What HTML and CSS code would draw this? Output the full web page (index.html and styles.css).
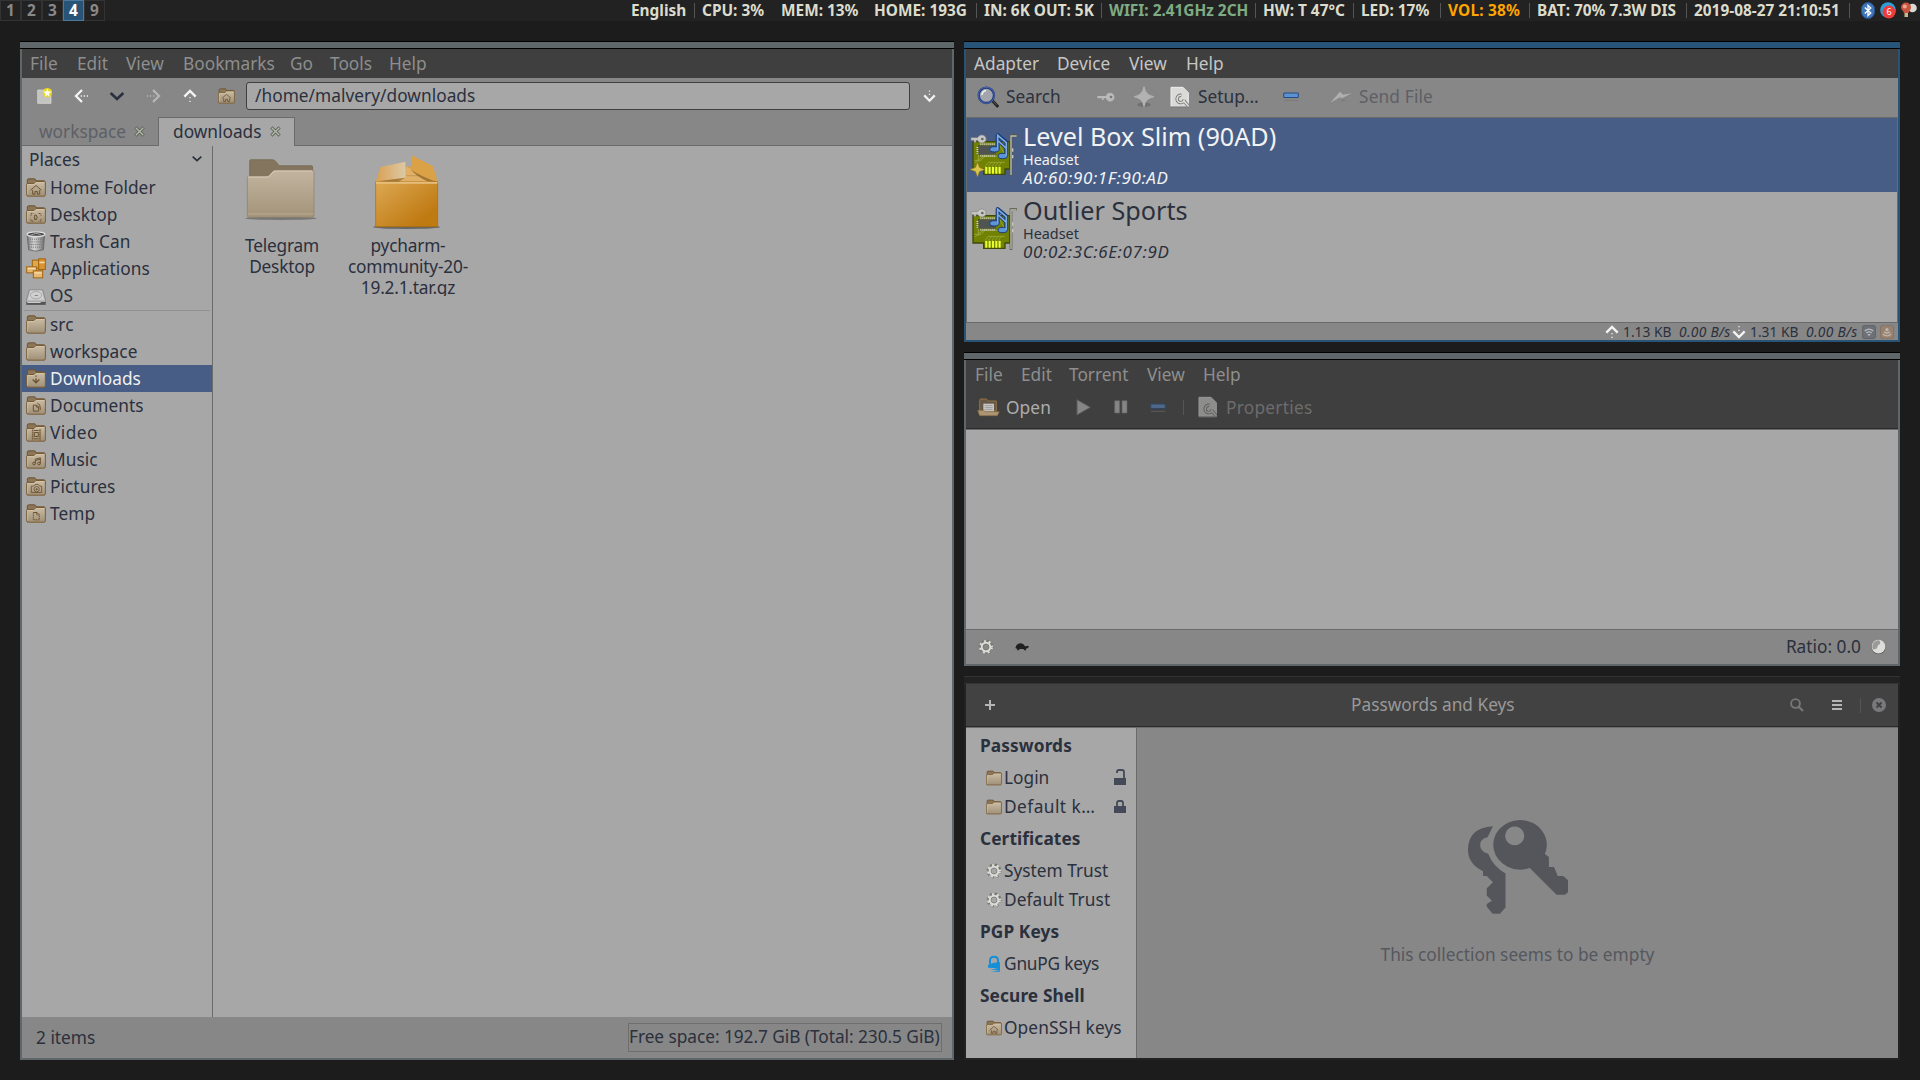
FILE: index.html
```html
<!DOCTYPE html>
<html lang="en">
<head>
<meta charset="utf-8">
<title>Workspace 4</title>
<link rel="stylesheet" href="styles.css">
</head>
<body>
<svg class="defs" aria-hidden="true">
  <defs>
    <linearGradient id="gFolder" x1="0" y1="0" x2="0" y2="1"><stop offset="0" stop-color="#cbbda5"/><stop offset="1" stop-color="#9f9078"/></linearGradient>
    <linearGradient id="gBig" x1="0" y1="0" x2="0" y2="1"><stop offset="0" stop-color="#c2b49f"/><stop offset="1" stop-color="#a3937a"/></linearGradient>
    <linearGradient id="gBox" x1="0" y1="0" x2="1" y2="1"><stop offset="0" stop-color="#dda853"/><stop offset=".8" stop-color="#bf7a12"/></linearGradient>
    <linearGradient id="gFlap" x1="0" y1="0" x2="1" y2="0"><stop offset="0" stop-color="#d9a052"/><stop offset="1" stop-color="#dcc9a5"/></linearGradient>
    <linearGradient id="gMetal" x1="0" y1="0" x2="1" y2="0"><stop offset="0" stop-color="#777"/><stop offset=".4" stop-color="#d5d5d5"/><stop offset="1" stop-color="#707070"/></linearGradient>
    <symbol id="folder" viewBox="0 0 60 58">
      <path d="M4 20V7q0-4 4-4h18q3 0 4 6h24q3 0 3 4v10z" fill="#8b7658" stroke="#6d5231" stroke-width="3"/>
      <path d="M2 20q0-3 3-3h19l6-6h25q3 0 3 3v37q0 4-4 4H6q-4 0-4-4z" fill="url(#gFolder)" stroke="#7b5c32" stroke-width="3"/>
      <path d="M5 50V20h20l6-6h24" fill="none" stroke="#d8c9ad" stroke-width="2"/>
    </symbol>
    <symbol id="folderHome" viewBox="0 0 60 58"><use href="#folder"/><path d="M14 37l16-14 16 14M20 37v12h7v-8h7v8h7V37" fill="none" stroke="#6c5230" stroke-width="3"/></symbol>
    <symbol id="gear" viewBox="0 0 46 46">
      <circle cx="23" cy="23" r="17" fill="none" stroke="#77776f" stroke-width="9" stroke-dasharray="7 6.35"/>
      <circle cx="23" cy="23" r="16" fill="none" stroke="#dcdcd8" stroke-width="8" stroke-dasharray="5 8.35" stroke-dashoffset="-1"/>
      <circle cx="23" cy="23" r="12" fill="none" stroke="#dcdcd8" stroke-width="6"/>
      <circle cx="23" cy="23" r="8.5" fill="none" stroke="#77776f" stroke-width="2"/>
    </symbol>
    <symbol id="tabx" viewBox="0 0 32 32"><path d="M4 4l24 24M28 4L4 28" stroke="#5b6055" stroke-width="9"/><path d="M5 5l22 22M27 5L5 27" stroke="#b4b9a9" stroke-width="4"/></symbol>
    <symbol id="setup" viewBox="0 0 60 64">
      <path d="M3 3h36l16 16v42H3z" fill="#dadad8" stroke="#efefef" stroke-width="3"/>
      <path d="M2 62h54" stroke="#666" stroke-width="3"/>
      <path d="M34 27a11 11 0 1 0 9 13M42 44l12 14" fill="none" stroke="#73736f" stroke-width="10"/>
      <path d="M34 27a11 11 0 1 0 9 13M40 42l14 16" fill="none" stroke="#dedede" stroke-width="5"/>
    </symbol>
    <symbol id="minus" viewBox="0 0 46 26"><path d="M3 24h40" stroke="#7b7b7b" stroke-width="3"/><rect x="2" y="3" width="42" height="13" rx="2" fill="#5d92d2" stroke="#264a84" stroke-width="3"/></symbol>
    <symbol id="device" viewBox="0 0 142 132">
      <path d="M8 26H118V108H104V124H40V108H8z" fill="#718102" stroke="#3f4a09" stroke-width="4"/>
      <path d="M14 90l24-20h46M86 34l20 36M12 82h20l16-16M24 54v32" stroke="#97a538" stroke-width="3" fill="none"/>
      <path d="M46 120V98l8-10h50M56 120V98l8-10M66 120V98l8-10M76 120V98l8-10M86 120V98l8-10" stroke="#a4b245" stroke-width="2" fill="none"/>
      <path d="M48 122v-20M58 122v-20M68 122v-20M78 122v-20M88 122v-20" stroke="#e9ff2b" stroke-width="6"/>
      <path d="M30 34h44M30 68h44M22 42v20" stroke="#d4d4cc" stroke-width="7" stroke-dasharray="3 3"/>
      <rect x="25" y="38" width="50" height="26" fill="#505450" stroke="#333"/>
      <path d="M122 128V8h18" fill="none" stroke="#55554c" stroke-width="8"/>
      <path d="M122 126V9h17" fill="none" stroke="#bdbda9" stroke-width="4"/>
      <path d="M127 46v10M127 66v10" stroke="#c8c8be" stroke-width="4"/>
      <path d="M2 14h20a13 12 0 1 1 0 8h-5v6h-6v-6H2z" fill="#c8c9c5" stroke="#888" stroke-width="2"/><circle cx="36" cy="18" r="4" fill="#656a62"/>
      <path d="M82 48V6l26 22v40" fill="none" stroke="#173c78" stroke-width="12" stroke-linejoin="round"/>
      <path d="M84 24l24 22" stroke="#173c78" stroke-width="9"/>
      <g fill="#5d93d7" stroke="#173c78" stroke-width="3"><ellipse cx="72" cy="49" rx="14" ry="8"/><ellipse cx="97" cy="69" rx="14" ry="8"/></g>
      <path d="M82 49V7l26 22v40M84 24l24 22" fill="none" stroke="#7fabe2" stroke-width="5"/>
    </symbol>
    <symbol id="upDots" viewBox="0 0 42 42"><path d="M4 23L21 6l17 17" fill="none" stroke="#f4f4f4" stroke-width="7"/><path d="M19 24h4v4h-4zM19 35h4v4h-4z" fill="#eee"/></symbol>
    <symbol id="downDots" viewBox="0 0 42 42"><path d="M4 19L21 36l17-17" fill="none" stroke="#f4f4f4" stroke-width="7"/><path d="M19 14h4v4h-4zM19 3h4v4h-4z" fill="#eee"/></symbol>
  </defs>
</svg>

<header class="topbar">
  <nav class="workspaces"><span>1</span><span>2</span><span>3</span><span class="active">4</span><span>9</span></nav>
  <div class="status">
    <span>English</span><span class="sep">CPU: 3%</span><span>MEM: 13%</span><span>HOME: 193G</span><span class="sep">IN: 6K OUT: 5K</span><span class="sep wifi">WIFI: 2.41GHz 2CH</span><span class="sep">HW: T 47°C</span><span class="sep">LED: 17%</span><span class="sep vol">VOL: 38%</span><span class="sep">BAT: 70% 7.3W DIS</span><span class="sep">2019-08-27 21:10:51</span>
    <div class="sep tray">
      <svg width="14" height="17" viewBox="0 0 14 17"><rect x=".5" y=".5" width="13" height="16" rx="6.500" fill="#3f76b9" stroke="#2c5287"/><path d="M3.800 5.500l6 5.500L7 13.500v-10L9.800 6l-6 5.500" fill="none" stroke="#fff" stroke-width="1.300"/></svg>
      <svg width="16" height="17" viewBox="0 0 16 17"><circle cx="8" cy="8" r="7.800" fill="#2ba0d8"/><circle cx="9" cy="10" r="6.500" fill="#ee3b3b"/><text x="9" y="13.300" text-anchor="middle" class="badge">6</text></svg>
      <svg width="16" height="17" viewBox="0 0 16 17"><circle cx="11.500" cy="6" r="4.300" fill="#d9d9d4"/><path d="M0 5.500a5 5 0 0 1 10 0c0 2.500-2 3-2.500 5.500H3C2.500 8.500 0 8 0 5.500z" fill="#c65640"/><circle cx="3.800" cy="4.500" r="2" fill="#efa58e"/><path d="M3.500 11h3.500v4H3.500z" fill="#c9b98a"/></svg>
    </div>
  </div>
</header>

<main class="desktop">
  <section class="window files">
    <div class="titlebar"></div>
    <nav class="menu"><span>File</span><span>Edit</span><span>View</span><span>Bookmarks</span><span>Go</span><span>Tools</span><span>Help</span></nav>
    <div class="toolbar">
      <svg width="18" height="18" viewBox="0 0 54 54"><path d="M5 9h40v40H5z" fill="#c3c4bf" stroke="#e0e0dc" stroke-width="2"/><circle cx="34" cy="17" r="14" fill="#e8d622"/><path d="M34 5l3 8 9 1-7 6 2 9-7-5-7 5 2-9-7-6 9-1z" fill="#fff"/></svg>
      <svg width="14" height="16" viewBox="0 0 42 48"><path d="M24 6L6 24l18 18" fill="none" stroke="#f3f3f3" stroke-width="7"/><path d="M20 22h4v4h-4zM38 22h4v4h-4zM29 22h4v4h-4z" fill="#eee"/></svg>
      <svg width="16" height="16" viewBox="0 0 48 48"><path d="M5 15l19 18 19-18" fill="none" stroke="#2a303e" stroke-width="8"/></svg>
      <svg class="faded" width="14" height="16" viewBox="0 0 42 48"><path d="M18 6l18 18-18 18" fill="none" stroke="#eee" stroke-width="7"/><path d="M0 22h4v4H0zM9 22h4v4H9zM18 22h4v4h-4z" fill="#eee"/></svg>
      <svg width="14" height="14"><use href="#upDots"/></svg>
      <svg width="17" height="16" viewBox="0 0 60 58" preserveAspectRatio="none"><use href="#folderHome"/></svg>
      <div class="path">/home/malvery/downloads</div>
      <svg width="13" height="14"><use href="#downDots"/></svg>
    </div>
    <div class="tabs">
      <div class="tab">workspace<svg width="11" height="11"><use href="#tabx"/></svg></div>
      <div class="tab current">downloads<svg width="11" height="11"><use href="#tabx"/></svg></div>
      <div class="rest"></div>
    </div>
    <div class="body">
      <aside class="places">
        <div class="places-head">Places<svg width="12" height="10" viewBox="0 0 36 30"><path d="M5 8l13 12L31 8" fill="none" stroke="#2a303e" stroke-width="5"/></svg></div>
        <div class="place"><svg class="ic"><use href="#folderHome"/></svg>Home Folder</div>
        <div class="place"><svg class="ic" viewBox="0 0 60 58"><use href="#folder"/><path d="M15 33v-7h7M38 26h7v7M45 42v7h-7M22 49h-7v-7" fill="none" stroke="#6c5230" stroke-width="3" stroke-dasharray="4 2"/><path d="M26 31h5q5 6 0 13h-5z" fill="none" stroke="#6c5230" stroke-width="3"/></svg>Desktop</div>
        <div class="place"><svg class="ic" viewBox="0 0 60 62"><path d="M3 8l5 48q22 8 44 0l4-48z" fill="url(#gMetal)" stroke="#555" stroke-width="2"/><path d="M6 24h48M7 32h46M8 40h44M9 48h42" stroke="#777" stroke-width="3" stroke-dasharray="3 3"/><ellipse cx="30" cy="9" rx="27" ry="7" fill="#454545" stroke="#ddd" stroke-width="4"/><path d="M14 12q16-10 30-2" stroke="#aaa" stroke-width="3" fill="none"/></svg>Trash Can</div>
        <div class="place"><svg class="ic" viewBox="0 0 60 62"><g stroke="#a2650c" stroke-width="3"><rect x="19" y="6" width="19" height="24" fill="#dfa74e"/><rect x="38" y="2" width="20" height="32" fill="#d99331"/><rect x="2" y="26" width="29" height="18" fill="#e5b56c"/><rect x="22" y="38" width="28" height="21" fill="#e6b874"/></g><path d="M40 13h16M5 31h24M25 44h22" stroke="#f5dcae" stroke-width="4"/></svg>Applications</div>
        <div class="place"><svg class="ic" viewBox="0 0 60 58"><path d="M10 12h40l9 32v11H1V44z" fill="#b9b9b9" stroke="#777" stroke-width="2"/><path d="M13 14h34l8 28H5z" fill="#d0d0d0"/><ellipse cx="30" cy="28" rx="17" ry="11" fill="none" stroke="#aaa" stroke-width="3"/><path d="M26 29h10" stroke="#888" stroke-width="3"/><path d="M1 48h58v9H1z" fill="#555"/><path d="M4 50h40" stroke="#ccc" stroke-width="3"/></svg>OS</div>
        <hr>
        <div class="place"><svg class="ic"><use href="#folder"/></svg>src</div>
        <div class="place"><svg class="ic"><use href="#folder"/></svg>workspace</div>
        <div class="place selected"><svg class="ic" viewBox="0 0 60 58"><use href="#folder"/><path d="M20 32l10 10 10-10M30 20v4M30 28v12" fill="none" stroke="#6c5230" stroke-width="4"/></svg>Downloads</div>
        <div class="place"><svg class="ic" viewBox="0 0 60 58"><use href="#folder"/><path d="M22 28h10l6 6v12H22zM32 28v6h6M34 22q9 2 9 20" fill="none" stroke="#6c5230" stroke-width="3"/></svg>Documents</div>
        <div class="place"><svg class="ic" viewBox="0 0 60 58"><use href="#folder"/><path d="M20 20v32M42 20v32" stroke="#6c5230" stroke-width="5" stroke-dasharray="4 2"/><path d="M25 29h12v12H25zM24 23h14M24 48h14" fill="none" stroke="#6c5230" stroke-width="3"/></svg><span class="wide">Video</span></div>
        <div class="place"><svg class="ic" viewBox="0 0 60 58"><use href="#folder"/><path d="M28 41V28l15-4v17M28 32l15-4" fill="none" stroke="#6c5230" stroke-width="3"/><circle cx="24" cy="41" r="4" fill="none" stroke="#6c5230" stroke-width="3"/><circle cx="39" cy="41" r="4" fill="none" stroke="#6c5230" stroke-width="3"/></svg>Music</div>
        <div class="place"><svg class="ic" viewBox="0 0 60 58"><use href="#folder"/><path d="M16 28h7l4-5h10l4 5h6v19H16z" fill="none" stroke="#6c5230" stroke-width="2.500"/><circle cx="32" cy="37" r="8" fill="none" stroke="#6c5230" stroke-width="2.500"/><circle cx="32" cy="37" r="3" fill="#6c5230"/></svg>Pictures</div>
        <div class="place"><svg class="ic" viewBox="0 0 60 58"><use href="#folder"/><path d="M22 26h11l7 7" fill="none" stroke="#6c5230" stroke-width="3"/><path d="M22 26v22h18V33h-8v-7" fill="none" stroke="#6c5230" stroke-width="3" stroke-dasharray="4 2"/></svg>Temp</div>
      </aside>
      <div class="icons">
        <figure>
          <svg width="76" height="68" viewBox="0 0 228 204"><ellipse cx="114" cy="184" rx="108" ry="5" fill="#555" opacity=".6"/><path d="M20 60V12q0-4 4-4h64q6 0 10 5l11 13h96q4 0 4 4v30z" fill="#83755e" stroke="#73654f" stroke-width="2"/><path d="M13 62q0-4 4-4h54q5 0 8-4l9-10q3-4 8-4h112q5 0 5 5v130q0 6-6 6H18q-5 0-5-5z" fill="url(#gBig)" stroke="#8d7d65" stroke-width="2"/><path d="M15 60h57q5 0 9-5l9-10q3-3 8-3h110" fill="none" stroke="#dacfbd" stroke-width="3"/><path d="M15 171h196" stroke="#c4b59c" stroke-width="2"/></svg>
          <figcaption>Telegram<br>Desktop</figcaption>
        </figure>
        <figure>
          <svg width="76" height="75" viewBox="0 0 228 225"><ellipse cx="113" cy="216" rx="101" ry="6" fill="#444" opacity=".65"/><path d="M20 82L35 38l75-3 68-1 29 48z" fill="#d99a40"/><path d="M112 34l30 18 62 28H85z" fill="#e0b069"/><path d="M112 62h40" stroke="#b98a48" stroke-width="2"/><path d="M20 80h186v133q0 2-3 2H23q-3 0-3-2z" fill="url(#gBox)" stroke="#a96807" stroke-width="2"/><path d="M21 83h184" stroke="#e6bf7e" stroke-width="6"/><path d="M20 80L35 36l74-16v48z" fill="url(#gFlap)"/><path d="M25 79l84-11-20 12z" fill="#8d6830" opacity=".65"/><path d="M126 0l66 34 14 46q-45-12-80-35z" fill="#dba146"/><path d="M126 45q42 25 80 36l-30-2q-30-12-50-34z" fill="#865b1c" opacity=".7"/></svg>
          <figcaption>pycharm-<br>community-20-<br>19.2.1.tar.gz</figcaption>
        </figure>
      </div>
    </div>
    <footer><span>2 items</span><span class="free">Free space: 192.7 GiB (Total: 230.5 GiB)</span></footer>
  </section>

  <div class="column">
    <section class="window focused blue">
      <div class="titlebar"></div>
      <nav class="menu"><span>Adapter</span><span>Device</span><span>View</span><span>Help</span></nav>
      <div class="toolbar">
        <svg width="22" height="22" viewBox="0 0 66 66"><path d="M44 42l17 18" stroke="#222" stroke-width="9" stroke-linecap="round"/><path d="M47 45l12 12" stroke="#777" stroke-width="2"/><circle cx="28" cy="28" r="23" fill="#a2a6ac" stroke="#23397e" stroke-width="7"/><circle cx="28" cy="28" r="24" fill="none" stroke="#597ac5" stroke-width="2"/><path d="M15 27q1-12 12-13" stroke="#eee" stroke-width="5" fill="none"/></svg>
        <span>Search</span>
        <svg width="18" height="10" viewBox="0 0 54 30"><path d="M1 12h26a13 13 0 1 1 0 7h-7v5h-5v-5H1z" fill="#b9b9b9"/><circle cx="42" cy="15" r="4" fill="#777"/></svg>
        <svg width="22" height="22" viewBox="0 0 66 66"><ellipse cx="33" cy="56" rx="20" ry="7" fill="#717171"/><path d="M33 2q4 26 30 30-26 4-30 30-4-26-30-30 26-4 30-30z" fill="#b2b2b2" stroke="#b2b2b2" stroke-width="3"/></svg>
        <svg width="20" height="22"><use href="#setup"/></svg>
        <span>Setup...</span>
        <svg width="16" height="9"><use href="#minus"/></svg>
        <svg width="22" height="12" viewBox="0 0 66 36"><path d="M1 35L30 2l9 9 26-4L36 22l-6-3z" fill="#b0b0ae"/><path d="M36 26l14 1-16 5z" fill="#777"/></svg>
        <span class="off">Send File</span>
      </div>
      <div class="devices">
        <article class="selected"><svg width="48" height="44"><use href="#device"/></svg><svg class="star" width="15" height="15" viewBox="0 0 44 44"><path d="M22 0l6 16 16 6-16 6-6 16-6-16-16-6 16-6z" fill="#d9c54b" stroke="#8d7a20" stroke-width="2"/></svg><div><h2>Level Box Slim (90AD)</h2><p>Headset</p><em>A0:60:90:1F:90:AD</em></div></article>
        <article><svg width="48" height="44"><use href="#device"/></svg><div><h2>Outlier Sports</h2><p>Headset</p><em>00:02:3C:6E:07:9D</em></div></article>
      </div>
      <div class="stats">
        <svg width="14" height="14"><use href="#upDots"/></svg><span>1.13 KB</span><em>0.00 B/s</em>
        <svg width="14" height="14"><use href="#downDots"/></svg><span>1.31 KB</span><em>0.00 B/s</em>
        <svg class="led" width="14" height="14" viewBox="0 0 42 42"><rect x="1" y="1" width="40" height="40" rx="8" fill="#6d7177" stroke="#54585d" stroke-width="2"/><path d="M8 18q13-11 26 0M13 24q8-7 16 0" fill="none" stroke="#b6b9bc" stroke-width="4"/><path d="M16 27h10l-5 7z" fill="#b6b9bc"/></svg>
        <svg width="14" height="14" viewBox="0 0 42 42"><rect x="1" y="1" width="40" height="40" rx="8" fill="#968272" stroke="#7d6a5a" stroke-width="2"/><path d="M8 27q13 11 26 0M12 20q9 8 18 0" fill="none" stroke="#c1b5a8" stroke-width="4"/><circle cx="21" cy="14" r="5" fill="#c1b5a8"/></svg>
      </div>
    </section>

    <section class="window torrent">
      <div class="titlebar"></div>
      <nav class="menu"><span>File</span><span>Edit</span><span>Torrent</span><span>View</span><span>Help</span></nav>
      <div class="toolbar">
        <svg width="23" height="19" viewBox="0 0 69 57"><path d="M8 40V7q0-4 4-4h16l6 6h24v30z" fill="#655746" stroke="#947244" stroke-width="3"/><path d="M19 17h32v24H19z" fill="#c7c7c7"/><path d="M23 23h24M23 29h24M23 35h24" stroke="#888" stroke-width="2"/><path d="M2 37h18l5 4h42l-6 12H8z" fill="#aa9677" stroke="#8a6638" stroke-width="2"/></svg>
        <span class="on">Open</span>
        <svg width="15" height="17" viewBox="0 0 45 51"><path d="M3 2l40 23L3 48z" fill="#868686" stroke="#5b5b5b" stroke-width="3"/></svg>
        <svg width="14" height="14" viewBox="0 0 42 42"><path d="M2 2h15v37H2zM24 2h15v37H24z" fill="#858585" stroke="#606060" stroke-width="2"/></svg>
        <svg class="half" width="16" height="9"><use href="#minus"/></svg>
        <i></i>
        <svg class="half" width="20" height="22"><use href="#setup"/></svg>
        <span class="props">Properties</span>
      </div>
      <div class="list"></div>
      <footer>
        <svg width="16" height="16"><use href="#gear"/></svg>
        <svg width="14" height="9" viewBox="0 0 42 27"><path d="M1 18Q6 2 18 4q9 1 12 9h3q5-3 8 0l-1 4-8 4 2 4h-6l-3-4H14l-3 4H6l1-4z" fill="#202020"/></svg>
        <span>Ratio: 0.0</span>
        <svg width="15" height="16" viewBox="0 0 45 48"><circle cx="22.500" cy="25" r="21" fill="#555"/><circle cx="22.500" cy="23" r="20.500" fill="#dddeda"/><path d="M24 4a19 19 0 0 0-19 25q5 4 11 0 4-3 4-8 2-5 7-6 2-8-3-11z" fill="#9a9b98"/></svg>
      </footer>
    </section>

    <section class="window keys">
      <div class="titlebar"></div>
      <div class="header">
        <svg width="10" height="10" viewBox="0 0 10 10"><path d="M4 0h2v4h4v2H6v4H4V6H0V4h4z" fill="#b5b5b5"/></svg>
        <h1>Passwords and Keys</h1>
        <svg width="14" height="14" viewBox="0 0 14 14"><circle cx="5.500" cy="5.500" r="4.400" fill="none" stroke="#777" stroke-width="1.900"/><path d="M8.500 8.500l4.500 4.500" stroke="#777" stroke-width="2.300"/></svg>
        <svg width="10" height="10" viewBox="0 0 10 10"><path d="M0 0h10v2H0zM0 4h10v2H0zM0 8h10v2H0z" fill="#b5b5b5"/></svg>
        <i></i>
        <svg width="14" height="14" viewBox="0 0 14 14"><circle cx="7" cy="7" r="7" fill="#79797b"/><path d="M4.500 4.500l5 5M9.500 4.500l-5 5" stroke="#404040" stroke-width="1.800"/></svg>
      </div>
      <div class="body">
        <aside>
          <h3>Passwords</h3>
          <p><svg width="16" height="16"><use href="#folder"/></svg>Login<svg class="lock" width="12" height="17" viewBox="0 0 12 17"><path d="M0 9h12v7H0z" fill="#434957"/><path d="M3 4V3q0-2 2-2h3q2 0 2 2v6" fill="none" stroke="#434957" stroke-width="1.800"/></svg></p>
          <p><svg width="16" height="16"><use href="#folder"/></svg><span class="wide">Default k…</span><svg class="lock" width="12" height="17" viewBox="0 0 12 17"><path d="M0 8h12v7H0z" fill="#434957"/><path d="M3 9V5q0-2 2-2h2q2 0 2 2v4" fill="none" stroke="#434957" stroke-width="1.800"/></svg></p>
          <h3>Certificates</h3>
          <p><svg width="16" height="16"><use href="#gear"/></svg>System Trust</p>
          <p><svg width="16" height="16"><use href="#gear"/></svg><span class="loose">Default Trust</span></p>
          <h3>PGP Keys</h3>
          <p><svg width="16" height="17" viewBox="0 0 48 51"><path d="M12 28V16q0-11 12-11t12 11v12" fill="none" stroke="#148fd8" stroke-width="6"/><path d="M6 30q18-10 36-8v28H16l26-5-30-1 24-4-30-2z" fill="#148fd8"/></svg><span class="tight">GnuPG keys</span></p>
          <h3>Secure Shell</h3>
          <p><svg width="16" height="16"><use href="#folderHome"/></svg><span class="loose">OpenSSH keys</span></p>
        </aside>
        <div class="empty">
          <svg width="100" height="94" viewBox="343 479 272 284" preserveAspectRatio="none" fill="#55565c"><path fill-rule="evenodd" d="M484 479a73 75 0 0 1 68 103l11 9v30h14l10 27h15l13 13v36l-8 8h-23L511 624a73 75 0 1 1-27-145zm-14 20a26 28 0 1 0 .1 0z"/><path d="M411 498q-68 4-68 72 0 42 41 64v14h10l17 19-17 18v22l14 16-14 10v8l16 21h20l15-19V641q-34-22-47-60-22-6-22-27 0-18 20-23z"/></svg>
          <p>This collection seems to be empty</p>
        </div>
      </div>
    </section>
  </div>
</main>
</body>
</html>
```

FILE: styles.css
```css
* { box-sizing: border-box; }
body {
  margin: 0; width: 1920px; height: 1080px; overflow: hidden;
  background: #1c1c1c; color: #2b303d;
  font: 17.3px "Noto Sans", "Open Sans", sans-serif;
  white-space: nowrap;
}
h1, h2, h3, p, figure, hr { margin: 0; }
svg { display: block; flex: none; }
.defs { position: absolute; width: 0; height: 0; }

/* status bar */
.topbar { height: 21px; background: #222; display: flex; justify-content: space-between; font-size: 15.4px; font-weight: 700; line-height: 22px; }
.workspaces { display: flex; gap: 0; }
.workspaces span { width: 21px; height: 21px; border: 1px solid #333; color: #888; text-align: center; line-height: 19px; }
.workspaces .active { background: #285577; border-color: #4c7899; color: #fff; }
.status { display: grid; grid-template-columns: 63px 87px 93px 102px 125px 154px 98px 87px 89px 157px 163px 71px; color: #dcdccc; }
.sep { position: relative; padding-left: 8px; }
.sep::before { content: ""; position: absolute; left: 0; top: 3px; width: 1px; height: 15px; background: #555; }
.wifi { color: #7fab82; }
.vol { color: #ffa500; letter-spacing: .2px; }
.tray { display: flex; gap: 5px; padding: 2px 0 0 12px; }
.badge { font-size: 9px; font-weight: 400; fill: #fff; }

/* windows */
.desktop { display: flex; gap: 10px; padding: 20px 20px 0; }
.window { display: flex; flex-direction: column; border: 2px solid #5f676a; border-top: 0; background: #878787; }
.titlebar { height: 8px; margin: 0 -2px; background: #5f676a; border-top: 1px solid #000; border-bottom: 1px solid #000; flex: none; }
.menu { display: grid; height: 29px; line-height: 29px; background: #3f3f3f; color: #8e8e8e; padding-left: 7px; flex: none; }
.toolbar { display: flex; align-items: center; flex: none; }
.column { width: 936px; }

.files { width: 934px; height: 1019px; }
.files .menu { grid-template-columns: 47px 49px 57px 107px 40px 59px 60px; padding-left: 8px; }
.files .toolbar { height: 39px; padding: 0 0 3px 14px; }
.files .toolbar svg:nth-of-type(2) { margin-left: 20px; }
.files .toolbar svg:nth-of-type(3) { margin-left: 21px; }
.files .toolbar svg:nth-of-type(4) { margin-left: 22px; }
.files .toolbar svg:nth-of-type(5) { margin-left: 22px; }
.files .toolbar svg:nth-of-type(6) { margin-left: 21px; }
.faded { opacity: .45; }
.path { margin: 0 12px 0 11px; padding-left: 8px; width: 664px; height: 28px; line-height: 25px; border: 1px solid #3f3f3f; border-radius: 3px; background: #a7a7a7; letter-spacing: .03px; }
.files .toolbar svg:last-child { margin-left: 1px; }
.tabs { display: flex; height: 29px; flex: none; }
.tab { display: flex; align-items: center; gap: 8px; width: 136px; padding-left: 17px; border-bottom: 1px solid #6b6b6b; color: #5d6066; line-height: 29px; }
.tab.current { width: 137px; padding-left: 14px; background: #a7a7a7; border: 1px solid #6b6b6b; border-bottom: 0; color: #2b303d; line-height: 27px; padding-bottom: 1px; }
.rest { flex: 1; border-bottom: 1px solid #6b6b6b; }
.files .body { flex: 1; display: flex; background: #a7a7a7; }
.places { width: 191px; border-right: 1px solid #6b6b6b; }
.places-head { display: flex; justify-content: space-between; align-items: center; height: 28px; padding: 0 9px 2px 7px; }
.place { display: flex; align-items: center; gap: 4px; height: 27px; line-height: 26px; padding-left: 4px; letter-spacing: .05px; }
.ic { width: 20px; height: 21px; }
.place.selected { background: #475d86; color: #f0f0f0; }
hr { border: 0; height: 1px; margin: 1px 2px 0; background: #929292; }
.icons { display: flex; padding-left: 6px; }
figure { width: 126px; display: flex; flex-direction: column; align-items: center; justify-content: space-between; height: 150px; overflow: hidden; }
figure svg { margin: 11px 3px 0 0; }
figure:nth-child(2) svg { margin-top: 9px; }
figcaption { height: 61px; line-height: 21px; text-align: center; letter-spacing: -.22px; }
.files footer { height: 41px; display: flex; justify-content: space-between; align-items: center; padding: 0 10px 0 14px; flex: none; }
.free { width: 314px; height: 29px; border: 1px solid #6e6e6e; padding-left: 0; line-height: 26px; letter-spacing: -.05px; }

/* bluetooth manager */
.blue { height: 301px; border-color: #285577; }
.blue .titlebar { background: #285577; }
.blue .menu { color: #c6c6c6; grid-template-columns: 83px 72px 57px 60px; padding-left: 8px; }
.blue .toolbar { height: 39px; display: grid; grid-template-columns: 29px 91px 36px 37px 28px 85px 47px 29px 90px; padding: 0 0 2px 11px; }
.off { color: #5d6066; letter-spacing: .15px; }
.devices { flex: 1; background: #a7a7a7; border: 1px solid #6b6b6b; border-bottom: 0; }
article { position: relative; display: flex; height: 74px; padding: 15px 0 0 3px; }
article > div { margin: -15px 0 0 5px; }
article.selected { background: #475d86; color: #f2f2f2; }
.star { position: absolute; left: 3px; top: 44px; }
h2 { font-size: 25.2px; font-weight: 400; line-height: 36px; }
article p { font-size: 14.4px; line-height: 16px; margin-top: -2px; }
article em { display: block; font-size: 17px; letter-spacing: .6px; line-height: 20px; }
.stats { height: 18px; display: grid; grid-template-columns: 18px 56px 53px 18px 56px 56px 18px 18px; justify-content: end; align-items: center; border-top: 1px solid #6b6b6b; font-size: 13.8px; line-height: 17px; flex: none; }
.stats em { letter-spacing: .3px; }

/* torrent client */
.torrent { height: 314px; margin-top: 10px; }
.torrent .menu { grid-template-columns: 46px 48px 78px 56px 60px; padding-left: 9px; }
.torrent .toolbar { height: 40px; display: grid; grid-template-columns: 29px 70px 38px 36px 33px 15px 28px 90px; padding: 0 0 3px 11px; background: #3f3f3f; color: #6c6c6c; border-bottom: 1px solid #2c2c2c; letter-spacing: .1px; }
.torrent .on { color: #adadad; }
.torrent .props { letter-spacing: .25px; }
.toolbar i { width: 1px; height: 15px; background: #555; }
.half { opacity: .5; }
.list { flex: 1; background: #a7a7a7; border-top: 1px solid #6b6b6b; }
.torrent footer { height: 35px; border-top: 1px solid #6b6b6b; display: flex; align-items: center; padding: 0 12px 1px; flex: none; }
.torrent footer svg:nth-of-type(2) { margin-left: 21px; }
.torrent footer span { margin: 0 10px 0 auto; }

/* keyring */
.keys { height: 384px; margin-top: 10px; border-color: #222; }
.keys .titlebar { background: #222; border-color: #333; }
.header { height: 43px; display: grid; grid-template-columns: 366px 439px 42px 28px 12px 14px; align-items: center; padding-left: 19px; background: #424242; border-bottom: 1px solid #2c2c2c; flex: none; }
h1 { font-size: 17.3px; font-weight: 400; color: #999; line-height: 22px; padding-bottom: 1px; }
.header i { width: 1px; height: 15px; background: #555; }
.keys .body { display: flex; flex: 1; border-top: 1px solid #6b6b6b; }
.keys aside { width: 171px; border-right: 1px solid #6b6b6b; background: #a7a7a7; }
h3 { font-size: 17.3px; line-height: 35px; padding-left: 14px; letter-spacing: .1px; }
aside p { display: flex; align-items: center; gap: 2px; height: 29px; padding: 0 10px 0 20px; }
.wide { letter-spacing: .45px; }
.loose { letter-spacing: .1px; }
.tight { letter-spacing: -.2px; }
.lock { margin-left: auto; }
.empty { flex: 1; display: flex; flex-direction: column; align-items: center; padding-top: 92px; color: #55585f; }
.empty p { margin-top: 29px; }
```
